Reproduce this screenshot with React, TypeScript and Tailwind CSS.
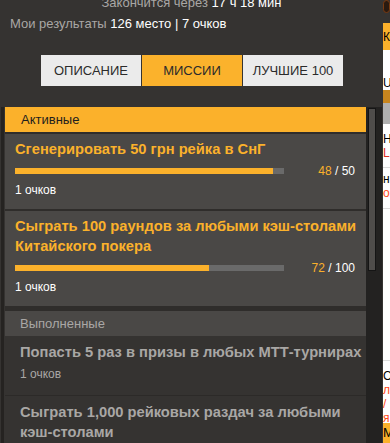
import React from 'react';

const font = { fontFamily: '"Liberation Sans", Arial, sans-serif' };

interface Mission {
  title: string;
  done: number;
  total: number;
  points: number;
}

const active: Mission[] = [
  { title: 'Сгенерировать 50 грн рейка в СнГ', done: 48, total: 50, points: 1 },
  { title: 'Сыграть 100 раундов за любыми кэш-столами Китайского покера', done: 72, total: 100, points: 1 },
];

const completed = [
  { title: 'Попасть 5 раз в призы в любых МТТ-турнирах', points: 1 },
  { title: 'Сыграть 1,000 рейковых раздач за любыми кэш-столами', points: 1 },
];

function ActiveCard({ m }: { m: Mission }) {
  return (
    <div className="shrink-0 bg-[#4a4846] pl-[10px] pt-[5px] pb-[12px]">
      <div className="text-[#fbb12b] font-bold text-[14.7px] leading-[20px]">{m.title}</div>
      <div className="flex items-center mt-[5px] h-[14px] pr-[11px]">
        <div className="w-[269px] h-[6px] bg-[#6a6a6a]">
          <div className="h-full bg-[#fbb12b]" style={{ width: `${(m.done / m.total) * 100}%` }} />
        </div>
        <div className="flex-1 text-right text-[12px] text-white">
          <span className="text-[#fbb12b]">{m.done}</span> / {m.total}
        </div>
      </div>
      <div className="text-white text-[12px] leading-[14px] mt-[5px]">{m.points} очков</div>
    </div>
  );
}

function Tab({ label, active }: { label: string; active?: boolean }) {
  return (
    <div
      className={`w-[100px] h-[31px] flex items-center justify-center text-[13px] text-[#2b2b2b] ${
        active ? 'bg-[#fbb22c]' : 'bg-[#ebebeb]'
      }`}
    >
      {label}
    </div>
  );
}

function SideStrip() {
  return (
    <div className="w-[7px] h-full bg-white flex flex-col overflow-hidden text-[12px] leading-[14px] text-black">
      <div className="shrink-0 h-[23px] bg-[#353331] flex items-start">
        <div className="w-[10px] h-[13px] rounded-full bg-[#2a1a10] border border-[#7a3a10]" />
      </div>
      <div className="shrink-0 h-[27px] bg-[#fbb12b] flex items-center whitespace-nowrap">К</div>
      <div className="shrink-0 h-[26px] bg-white" />
      <div className="shrink-0 h-[14px] whitespace-nowrap">U</div>
      <div className="shrink-0 h-[13px] bg-[#c8861e]" />
      <div className="shrink-0 h-[21px] bg-[#b0b0b0]" />
      <div className="shrink-0 h-[8px]" />
      <div className="shrink-0 h-[14px] whitespace-nowrap">На</div>
      <div className="shrink-0 h-[14px] whitespace-nowrap text-[#e0301e]">L</div>
      <div className="shrink-0 h-[8px] border-b border-[#ddd]" />
      <div className="shrink-0 h-[4px]" />
      <div className="shrink-0 h-[14px] whitespace-nowrap">ни</div>
      <div className="shrink-0 h-[14px] whitespace-nowrap text-[#ff4a1a]">ок</div>
      <div className="shrink-0 h-[9px] border-b border-[#ddd]" />
      <div className="flex-1" />
      <div className="shrink-0 h-[8px] border-b border-[#ddd]" />
      <div className="shrink-0 h-[8px]" />
      <div className="shrink-0 h-[14px] whitespace-nowrap">Ог</div>
      <div className="shrink-0 h-[14px] whitespace-nowrap text-[#ff4a1a]">ла</div>
      <div className="shrink-0 h-[14px] whitespace-nowrap text-[#ff4a1a]">/</div>
      <div className="shrink-0 h-[12px] whitespace-nowrap text-[#ff4a1a]">я</div>
      <div className="shrink-0 h-[20px] bg-[#fbb12b] whitespace-nowrap flex items-center text-[13px]">М</div>
    </div>
  );
}

export default function App() {
  return (
    <div className="w-[390px] h-[443px] overflow-hidden bg-[#353331] flex" style={font}>
      <div className="w-[383px] h-full flex flex-col">
        <div className="shrink-0 text-center text-[13px] leading-[15px] -mt-[5px]">
          <span className="text-[#a9a7a5]">Закончится через </span>
          <span className="text-white">17 ч 18 мин</span>
        </div>
        <div className="shrink-0 pl-[10px] mt-[6px] text-[13px] leading-[15px]">
          <span className="text-[#a9a7a5]">Мои результаты </span>
          <span className="text-white">126 место | 7 очков</span>
        </div>
        <div className="shrink-0 flex justify-center gap-[1px] mt-[24px] pl-[1px]">
          <Tab label="ОПИСАНИЕ" />
          <Tab label="МИССИИ" active />
          <Tab label="ЛУЧШИЕ 100" />
        </div>
        <div className="flex flex-1 mt-[21px] min-h-0">
          <div className="w-[3px] bg-[#252321] ml-[1px]" />
          <div className="w-[1px]" />
          <div className="w-[361px] flex flex-col overflow-hidden">
            <div className="shrink-0 h-[25px] bg-[#fbb12b] flex items-center px-[16px] text-[13px] text-[#1e1e1e]">
              Активные
            </div>
            <div className="shrink-0 h-[2px] bg-[#2f2d2b]" />
            <ActiveCard m={active[0]} />
            <div className="shrink-0 h-[2px] bg-[#2f2d2b]" />
            <ActiveCard m={active[1]} />
            <div className="shrink-0 h-[5px] bg-[#2f2d2b]" />
            <div className="shrink-0 h-[25px] bg-[#4a4846] flex items-center px-[15px] text-[13px] text-[#a9a7a5]">
              Выполненные
            </div>
            {completed.map(c => (
              <div key={c.title} className="shrink-0 bg-[#353331] pl-[15px] pt-[6px] pb-[14px] border-b border-[#2c2a28]">
                <div className="text-[#a9a7a5] font-bold text-[14.7px] leading-[20px]">{c.title}</div>
                <div className="text-[#a9a7a5] text-[12px] leading-[14px] mt-[5px]">{c.points} очков</div>
              </div>
            ))}
          </div>
          <div className="w-[16px] bg-[#232221] flex flex-col items-start pl-[2px]">
            <div className="w-[8px] h-[163px] bg-[#4f4d4b] border border-[#151515] mt-[1px]" />
          </div>
        </div>
      </div>
      <SideStrip />
    </div>
  );
}
